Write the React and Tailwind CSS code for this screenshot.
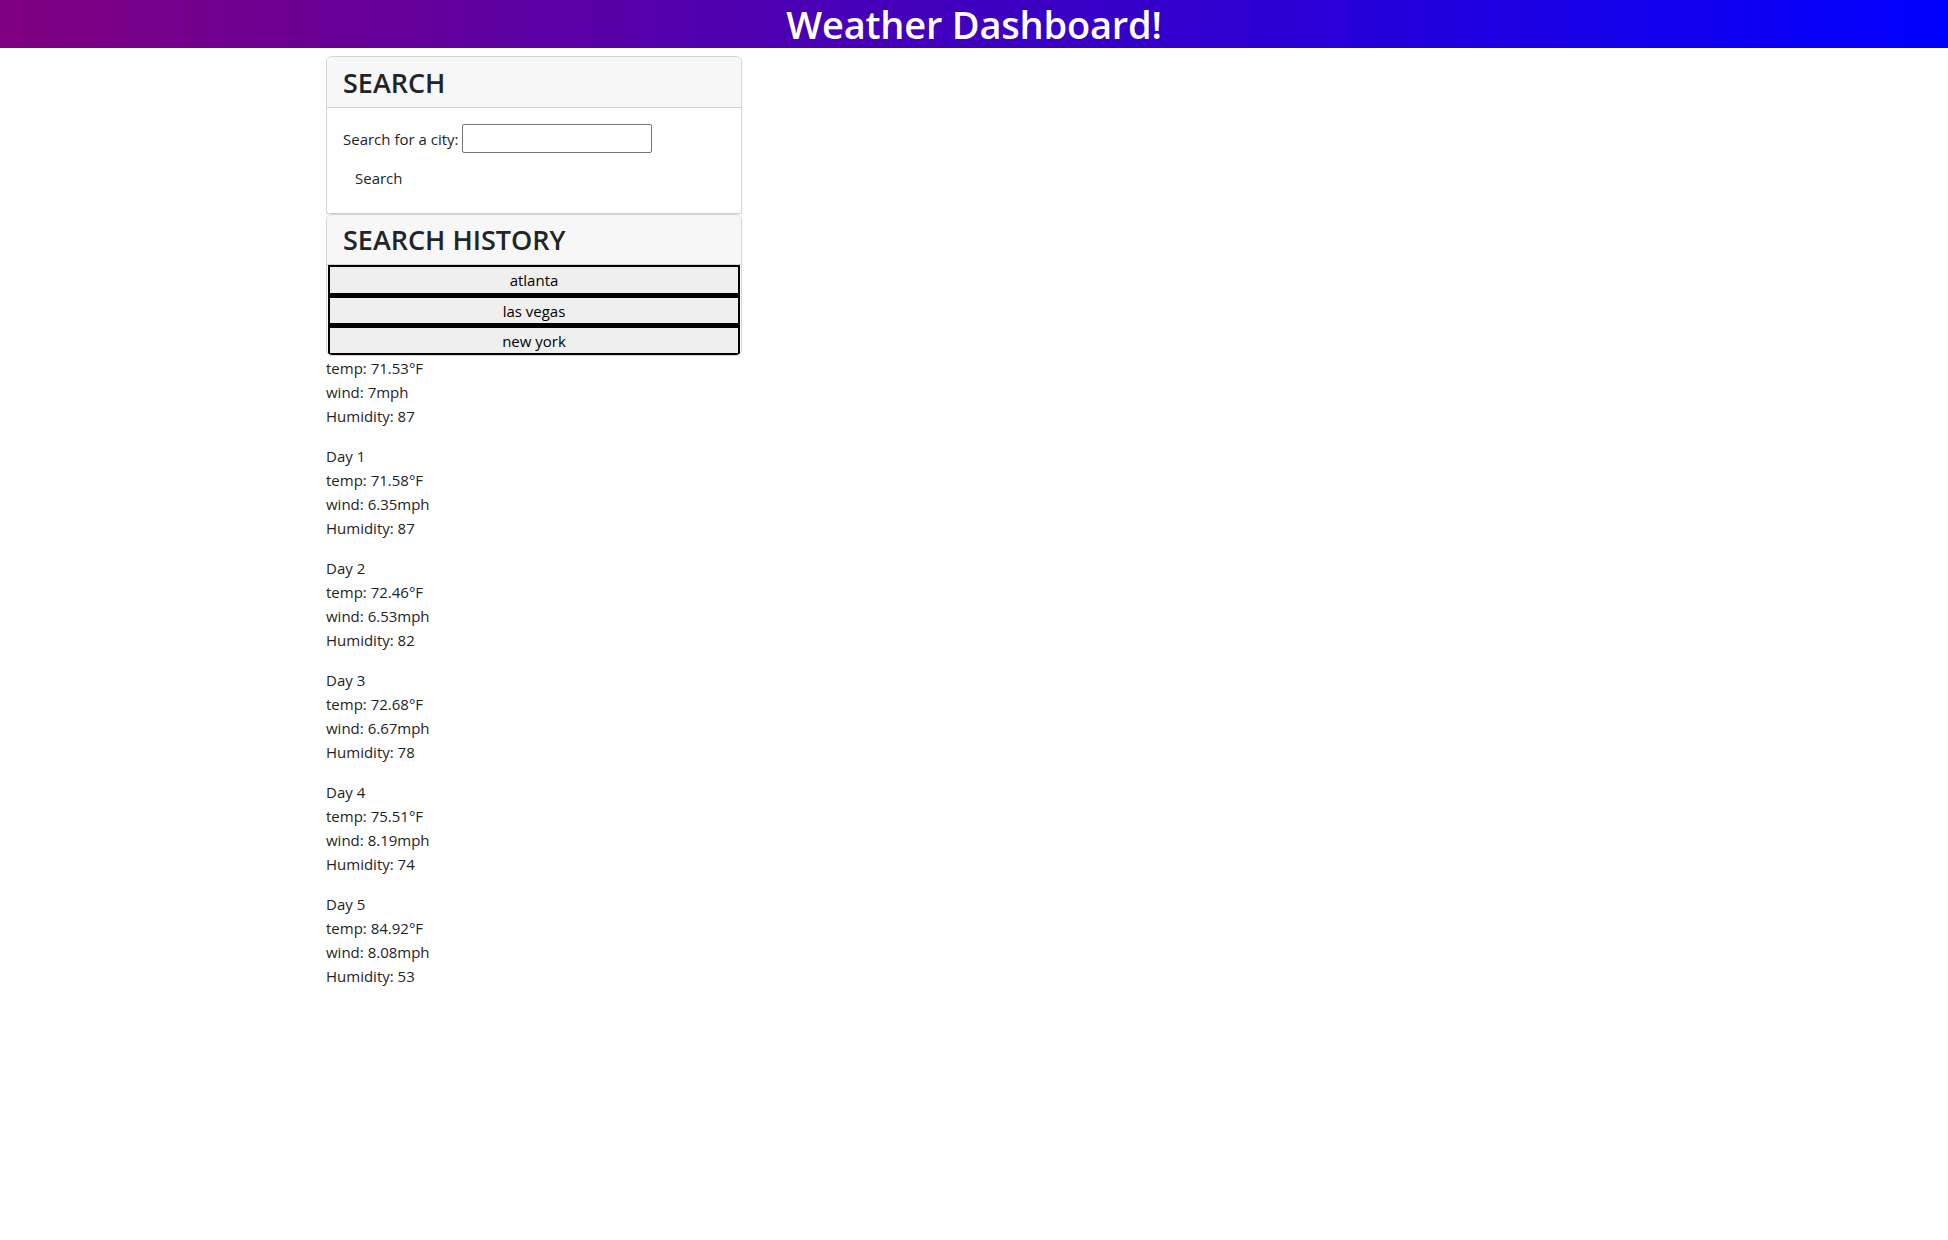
import React from "react";

const current = { temp: "71.53", wind: "7", humidity: "87" };
const days = [
  { temp: "71.58", wind: "6.35", humidity: "87" },
  { temp: "72.46", wind: "6.53", humidity: "82" },
  { temp: "72.68", wind: "6.67", humidity: "78" },
  { temp: "75.51", wind: "8.19", humidity: "74" },
  { temp: "84.92", wind: "8.08", humidity: "53" },
];

export default function App() {
  return (
    <div
      className="min-h-[1240px] bg-white text-[#212529] text-[16px] leading-[24px]"
      style={{ fontFamily: '"Open Sans", "Noto Sans", sans-serif' }}
    >
      <header className="h-[48px] bg-[linear-gradient(to_right,#800080,#0000ff)] flex items-center justify-center">
        <h1 className="text-white text-[38px] leading-[48px] font-semibold tracking-[-0.2px]">
          Weather Dashboard!
        </h1>
      </header>

      <div className="w-[1320px] mx-auto px-[12px] pt-[8px]">
        <div className="w-[416px]">
          <div className="border border-[#d3d3d3] rounded-t-[6px] overflow-hidden">
            <div className="bg-[#f7f7f7] border-b border-[#d3d3d3] px-[16px] pt-[9px] pb-[7px]">
              <h3 className="text-[27px] leading-[34px] font-semibold">SEARCH</h3>
            </div>
            <div className="px-[16px] pt-[16px] pb-[16px]">
              <div className="flex items-center h-[29px]">
                <label className="text-[15px] mr-[3px]">Search for a city:</label>
                <input
                  type="text"
                  className="w-[190px] h-[29px] border border-[#767676] rounded-[2px] bg-white outline-none"
                />
              </div>
              <button className="mt-[6px] h-[38px] px-[12px] text-[15px] text-[#212529] bg-transparent">
                Search
              </button>
            </div>
          </div>

          <div className="border border-[#d3d3d3] rounded-[6px] overflow-hidden">
            <div className="bg-[#f7f7f7] border-b border-[#d3d3d3] px-[16px] py-[8px] h-[50px]">
              <h3 className="text-[27px] leading-[34px] font-semibold">SEARCH HISTORY</h3>
            </div>
            <div className="flex flex-col mx-px">
              {["atlanta", "las vegas", "new york"].map((c, i) => (
                <button
                  key={c}
                  className={
                    i === 0
                      ? "h-[30px] border-2 border-black bg-[#efefef] text-[15px] text-black leading-[22px]"
                      : "h-[30px] border-2 border-t-[3px] border-black bg-[#efefef] text-[15px] text-black leading-[22px]"
                  }
                >
                  {c}
                </button>
              ))}
            </div>
          </div>

          <div className="text-[15px]">
            <div className="mb-[16px]">
              <div>temp: {current.temp}°F</div>
              <div>wind: {current.wind}mph</div>
              <div>Humidity: {current.humidity}</div>
            </div>
            {days.map((d, i) => (
              <div key={i} className="mb-[16px]">
                <div>Day {i + 1}</div>
                <div>temp: {d.temp}°F</div>
                <div>wind: {d.wind}mph</div>
                <div>Humidity: {d.humidity}</div>
              </div>
            ))}
          </div>
        </div>
      </div>
    </div>
  );
}
